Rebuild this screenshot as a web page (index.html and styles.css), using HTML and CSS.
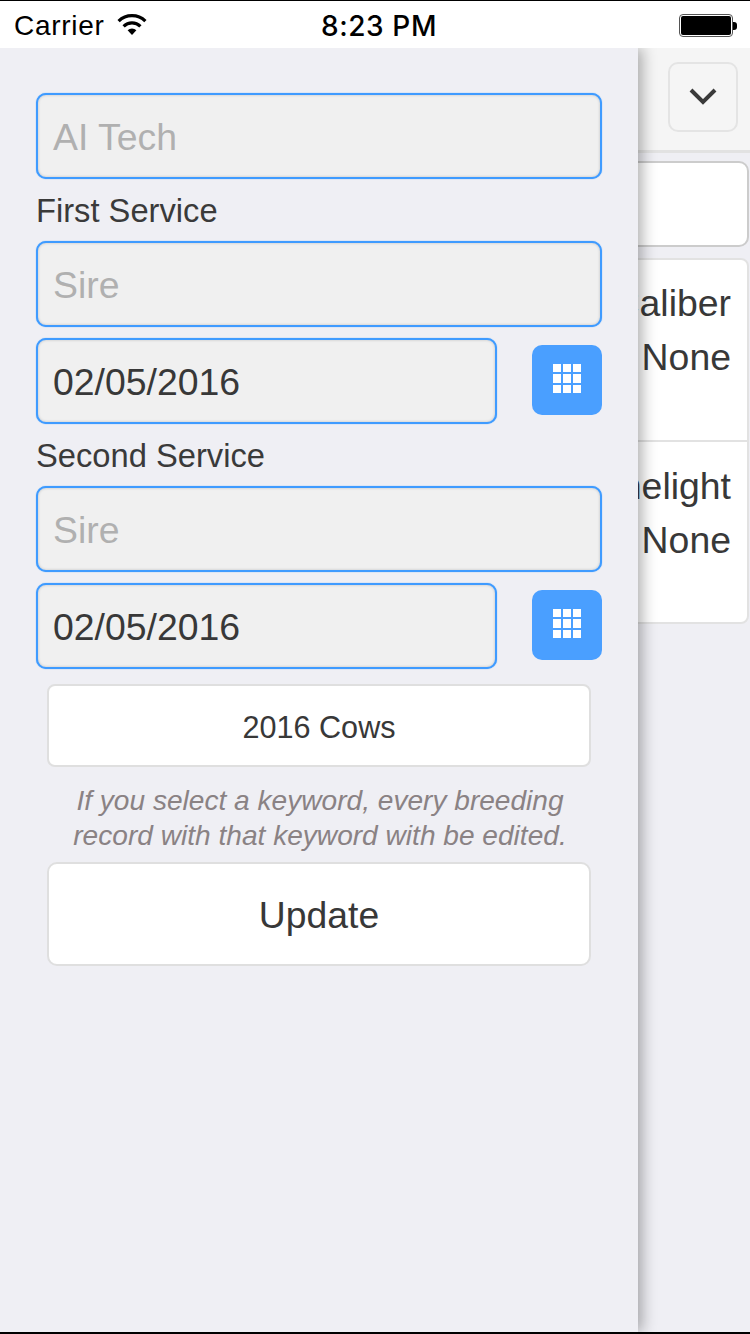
FILE: index.html
```html
<!DOCTYPE html>
<html lang="en">
<head>
<meta charset="utf-8">
<title>Breeding edit</title>
<link rel="stylesheet" href="styles.css">
</head>
<body>
<div class="phone">
  <div class="statusbar">
    <div class="status-left">
      <span class="carrier">Carrier</span>
      <svg class="wifi" width="30" height="22" viewBox="0 0 30 22"><path d="M15 21 L10.6 16.2 A6.4 6.4 0 0 1 19.4 16.2 Z" fill="#000"/><path d="M6.6 12.4 A12 12 0 0 1 23.4 12.4" fill="none" stroke="#000" stroke-width="3.2"/><path d="M1.6 7.2 A19 19 0 0 1 28.4 7.2" fill="none" stroke="#000" stroke-width="3.2"/></svg>
    </div>
    <span class="time">8:23 PM</span>
    <div class="battery"><div class="battery-body"><div class="battery-fill"></div></div><div class="battery-tip"></div></div>
  </div>
  <div class="stage">
    <div class="back">
      <div class="back-header">
        <div class="toggle"><svg class="chevron" width="30" height="18" viewBox="0 0 30 18"><path d="M3 3 L15 15 L27 3" fill="none" stroke="#3a3a3a" stroke-width="4"/></svg></div>
      </div>
      <div class="back-search"></div>
      <div class="back-list">
        <div class="back-item"><div>Caliber</div><div>None</div></div>
        <div class="back-item"><div>Limelight</div><div>None</div></div>
      </div>
    </div>
    <aside class="drawer">
      <div class="field"><span class="placeholder">AI Tech</span></div>
      <div class="label">First Service</div>
      <div class="field"><span class="placeholder">Sire</span></div>
      <div class="date-row">
        <div class="field field-date"><span class="value">02/05/2016</span></div>
        <div class="cal-btn"><div class="cal-grid"><i></i><i></i><i></i><i></i><i></i><i></i><i></i><i></i><i></i></div></div>
      </div>
      <div class="label">Second Service</div>
      <div class="field"><span class="placeholder">Sire</span></div>
      <div class="date-row">
        <div class="field field-date"><span class="value">02/05/2016</span></div>
        <div class="cal-btn"><div class="cal-grid"><i></i><i></i><i></i><i></i><i></i><i></i><i></i><i></i><i></i></div></div>
      </div>
      <div class="btn btn-keyword">2016 Cows</div>
      <p class="note">If you select a keyword, every breeding record with that keyword with be edited.</p>
      <div class="btn btn-update">Update</div>
    </aside>
  </div>
</div>
</body>
</html>
```

FILE: styles.css
```css
* { box-sizing: border-box; }
html, body { margin: 0; padding: 0; }
body { width: 750px; height: 1334px; overflow: hidden; font-family: "Liberation Sans", Arial, sans-serif; color: #333; }
.phone { width: 750px; height: 1334px; display: flex; flex-direction: column; }

.statusbar { height: 48px; flex: none; background: #fff; border-top: 1px solid #000; display: grid; grid-template-columns: 1fr auto 1fr; align-items: center; padding: 0 13px 0 14px; color: #000; }
.status-left { display: flex; align-items: center; gap: 13px; }
.carrier { font-size: 28px; letter-spacing: .7px; line-height: 48px; margin-top: 1px; }
.wifi { margin-top: -1px; }
.time { font-family: Inter, sans-serif; font-weight: 500; font-size: 28px; letter-spacing: .6px; margin: 1px 0 0 7px; }
.battery { justify-self: end; display: flex; align-items: center; }
.battery-body { width: 54px; height: 23px; border: 1px solid #555; border-radius: 4px; padding: 1px; }
.battery-fill { width: 100%; height: 100%; background: #000; border-radius: 2px; }
.battery-tip { width: 4px; height: 8px; background: #000; border-radius: 0 3px 3px 0; }

.stage { flex: 1; position: relative; background: #efeff4; border-bottom: 2px solid #000; overflow: hidden; }

.back { display: flex; flex-direction: column; }
.back-header { height: 105px; background: #f5f5f5; border-bottom: 3px solid #e2e2e2; display: flex; justify-content: flex-end; padding: 14px 12px 0 0; }
.toggle { width: 70px; height: 70px; border: 2px solid #e4e4e4; border-radius: 10px; display: flex; align-items: center; justify-content: center; }
.chevron { margin-bottom: 2px; }
.back-search { height: 86px; margin-top: 8px; background: #fff; border: 2px solid #ccc; border-radius: 10px; margin-right: 1px; }
.back-list { margin-top: 11px; margin-right: 1px; background: #fff; border: 2px solid #e2e2e2; border-radius: 8px; }
.back-item { height: 180px; padding: 16px 16px 0 0; text-align: right; font-size: 37.4px; line-height: 54px; color: #383838; }
.back-item + .back-item { height: 182px; border-top: 2px solid #e2e2e2; padding-top: 17px; }

.drawer { position: absolute; left: 0; top: 0; bottom: 0; width: 638px; background: #efeff4; box-shadow: 4px 0 14px rgba(0,0,0,.32); padding: 45px 36px 0; display: flex; flex-direction: column; }
.field { height: 86px; flex: none; background: #f0f0f0; border: 2px solid #3f9bff; border-radius: 10px; box-shadow: 0 0 1px #3f9bff, inset 0 0 3px rgba(0,0,0,.2); display: flex; align-items: center; padding: 3px 15px 0; font-size: 37.4px; }
.placeholder { color: #b0b0b0; }
.value { color: #383838; }
.label { height: 62px; flex: none; padding-top: 1px; font-size: 32.7px; line-height: 62px; color: #3a3a3a; }
.date-row { display: flex; align-items: center; justify-content: space-between; margin-top: 11px; }
.field-date { width: 461px; }
.cal-btn { width: 70px; height: 70px; margin-bottom: 2px; padding-bottom: 3px; background: #4a9fff; border-radius: 10px; display: flex; align-items: center; justify-content: center; }
.cal-grid { display: grid; grid-template-columns: repeat(3, 8px); grid-auto-rows: 8.5px; gap: 2px; }
.cal-grid i { background: #fff; }

.btn { margin: 0 11px; background: #fff; border: 2px solid #dfdfdf; border-radius: 8px; display: flex; align-items: center; justify-content: center; color: #383838; flex: none; }
.btn-keyword { height: 83px; margin-top: 15px; padding-top: 3px; font-size: 30.6px; }
.btn-update { height: 104px; padding-top: 3px; font-size: 37.3px; border-radius: 10px; }
.note { margin: 16px 0 9px; text-align: center; font-style: italic; font-size: 28.1px; line-height: 35px; color: #8a8284; padding: 0 19px 0 21px; }
```
